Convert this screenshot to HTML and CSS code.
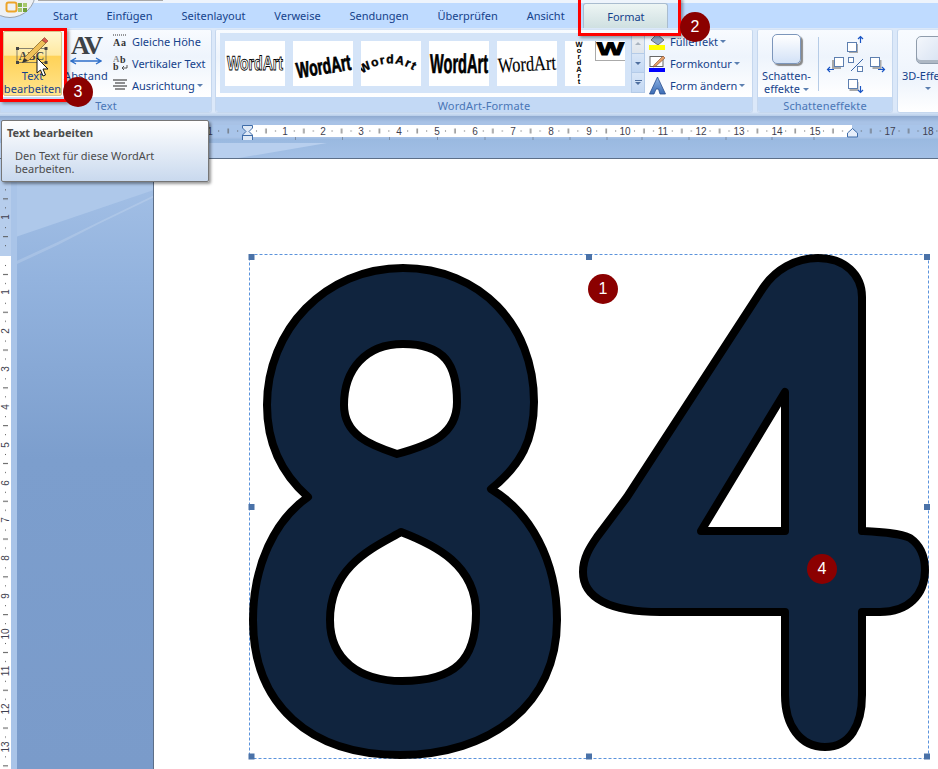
FILE: index.html
```html
<!DOCTYPE html>
<html lang="de">
<head>
<meta charset="utf-8">
<title>Word – WordArt</title>
<link rel="stylesheet" href="styles.css">
</head>
<body>
<div class="app">
  <div class="titlestrip"><div class="titlebar"></div></div>
  <nav class="tabs">
    <span class="tab">Start</span>
    <span class="tab">Einfügen</span>
    <span class="tab">Seitenlayout</span>
    <span class="tab">Verweise</span>
    <span class="tab">Sendungen</span>
    <span class="tab">Überprüfen</span>
    <span class="tab">Ansicht</span>
    <span class="tab tab-active">Format</span>
  </nav>

  <section class="ribbon">
    <div class="group group-text">
      <div class="group-body">
        <div class="bigbtn bigbtn-hot">
          <svg class="ico-edit" width="40" height="32" viewBox="0 0 40 32">
            <rect x="4" y="15.500" width="29" height="14" fill="none" stroke="#555" stroke-width=".7"/>
            <rect x="3" y="14" width="3" height="3" fill="#444"/><rect x="31.500" y="14" width="3" height="3" fill="#444"/>
            <rect x="3" y="28" width="3" height="3" fill="#444"/><rect x="31.500" y="28" width="3" height="3" fill="#444"/>
            <text x="18.500" y="27" class="abc">ABC</text>
            <path d="M11 25 L29 7 L33 10 L15 28 Z" fill="#eec05a" stroke="#8a6a2a" stroke-width=".8"/>
            <path d="M29 7 L31.500 4.500 L35 8 L33 10 Z" fill="#d9574a" stroke="#8a3a2a" stroke-width=".6"/>
            <path d="M11 25 L15 28 L9 30 Z" fill="#333"/>
          </svg>
          <span class="btnlabel">Text<br>bearbeiten</span>
        </div>
        <div class="bigbtn bigbtn-av">
          <span class="avglyph">AV</span>
          <svg class="avarrow" width="32" height="8" viewBox="0 0 32 8"><path d="M1 4 H31 M6 1 L1 4 L6 7 M26 1 L31 4 L26 7" fill="none" stroke="#2f6fc9" stroke-width="1.4"/></svg>
          <span class="btnlabel btnlabel-av">Abstand</span>
        </div>
        <div class="smallcol">
          <div class="smallrow">
            <svg width="15" height="14" viewBox="0 0 15 14"><path d="M0 1 H14" stroke="#333" stroke-dasharray="1 1"/><text x="0" y="12" class="ic-a">A</text><text x="8" y="12" class="ic-a">a</text></svg>
            <span>Gleiche Höhe</span>
          </div>
          <div class="smallrow">
            <svg width="15" height="16" viewBox="0 0 15 16"><text x="0" y="7" class="ic-g">A</text><text x="7" y="8" class="ic-b">b</text><text x="0" y="15" class="ic-b">b</text><path d="M9 13 H14 V10 M9 13 L11 11 M9 13 L11 15" fill="none" stroke="#444" stroke-width=".9"/></svg>
            <span>Vertikaler Text</span>
          </div>
          <div class="smallrow">
            <svg width="15" height="12" viewBox="0 0 15 12"><path d="M0 1H14M2 4H12M0 7H14M2 10H12" stroke="#222" stroke-width="1.2"/></svg>
            <span>Ausrichtung</span><i class="caret"></i>
          </div>
        </div>
      </div>
      <div class="group-label">Text</div>
    </div>

    <div class="group group-wordart">
      <div class="group-body">
        <div class="gallery">
          <div class="tiles">
            <svg class="tile" viewBox="0 0 60 45"><text x="2" y="29" class="wa wa-outline" textLength="56" lengthAdjust="spacingAndGlyphs">WordArt</text></svg>
            <svg class="tile" viewBox="0 0 60 45"><text x="3" y="33" transform="rotate(-9 30 25)" class="wa wa-heavy" textLength="55" lengthAdjust="spacingAndGlyphs">WordArt</text></svg>
            <svg class="tile" viewBox="0 0 60 45"><defs><path id="arch" d="M1 33 Q30 11 59 34"/></defs><text class="wa wa-arch"><textPath href="#arch">WordArt</textPath></text></svg>
            <svg class="tile" viewBox="0 0 60 45"><text x="1" y="32" class="wa wa-cond" textLength="58" lengthAdjust="spacingAndGlyphs">WordArt</text></svg>
            <svg class="tile" viewBox="0 0 60 45"><text x="1" y="30" transform="rotate(-3 30 25)" class="wa wa-serif" textLength="58" lengthAdjust="spacingAndGlyphs">WordArt</text></svg>
            <div class="tile tile-last">
              <svg class="vert" viewBox="0 0 30 45"><text class="wa wa-vert"><tspan x="14" y="6">W</tspan><tspan x="14" y="12">o</tspan><tspan x="14" y="18">r</tspan><tspan x="14" y="24">d</tspan><tspan x="14" y="31">A</tspan><tspan x="14" y="37">r</tspan><tspan x="14" y="43">t</tspan></text></svg>
              <div class="minitile"><svg width="29" height="19" viewBox="0 0 29 19"><text x="14.500" y="14" class="wa wa-w" textLength="27" lengthAdjust="spacingAndGlyphs">W</text></svg></div>
            </div>
          </div>
          <div class="scroller">
            <span class="sbtn sbtn-up"><i class="tri tri-up"></i></span>
            <span class="sbtn"><i class="tri"></i></span>
            <span class="sbtn sbtn-more"><i class="bar"></i><i class="tri"></i></span>
          </div>
        </div>
        <div class="smallcol smallcol-fx">
          <div class="smallrow">
            <svg width="17" height="17" viewBox="0 0 17 17"><path d="M8 1 L15 7 L9 12 L2 7 Z" fill="#8ea8c8" stroke="#555" stroke-width=".8"/><rect x="0" y="12" width="16" height="5" fill="#ff0"/></svg>
            <span>Fülleffekt</span><i class="caret"></i>
          </div>
          <div class="smallrow">
            <svg width="17" height="17" viewBox="0 0 17 17"><rect x="1" y="1.500" width="13" height="10" fill="#fff" stroke="#666"/><path d="M5 10 L14 1 L16 3 L7 11 L4 12 Z" fill="#e3a06a" stroke="#8a4a2a" stroke-width=".6"/><rect x="0" y="13" width="16" height="4" fill="#00f"/></svg>
            <span>Formkontur</span><i class="caret"></i>
          </div>
          <div class="smallrow">
            <svg width="17" height="19" viewBox="0 0 17 19"><defs><linearGradient id="ablue" x1="0" y1="0" x2="0" y2="1"><stop offset="0" stop-color="#8fb4e6"/><stop offset="1" stop-color="#3c6cb4"/></linearGradient></defs><path d="M8.500 1 L16.500 18 L11 18 L9.500 13 L7 13 L5 18 L.500 18 Z" fill="url(#ablue)" stroke="#2a4f8f" stroke-width=".8"/></svg>
            <span>Form ändern</span><i class="caret"></i>
          </div>
        </div>
      </div>
      <div class="group-label">WordArt-Formate</div>
    </div>

    <div class="group group-shadow">
      <div class="group-body">
        <div class="shadowbtn">
          <span class="shadowsq"></span>
          <span class="btnlabel btnlabel-dark">Schatten-<br>effekte<i class="caret caret-inline"></i></span>
        </div>
        <span class="vsep"></span>
        <svg class="nudge" width="60" height="62" viewBox="825 33 60 62">
          <g class="n-sq">
            <rect x="848" y="43" width="9" height="9" class="n-sh"/><rect x="846.500" y="41.500" width="9" height="9"/>
            <rect x="831" y="59" width="9" height="9" class="n-sh"/><rect x="833.500" y="56.500" width="9" height="9"/>
            <rect x="871.500" y="59" width="9" height="9" class="n-sh"/><rect x="869.500" y="56.500" width="9" height="9"/>
            <rect x="848.500" y="81" width="9" height="9" class="n-sh"/><rect x="847.500" y="78.500" width="9" height="9"/>
            <rect x="847.500" y="56.500" width="5" height="5"/><rect x="856.500" y="65.500" width="5" height="5"/>
          </g>
          <path d="M850 70 L862 58" class="n-line"/>
          <path d="M859.500 42 V36 M857 38 L859.500 35.500 L862 38 M833 68.500 H827 M829 66 L826.500 68.500 L829 71 M877 68.500 H883 M881 66 L883.500 68.500 L881 71 M859.500 85 V91 M857 89 L859.500 91.500 L862 89" class="n-arrow"/>
        </svg>
      </div>
      <div class="group-label">Schatteneffekte</div>
    </div>

    <div class="group group-3d">
      <div class="group-body">
        <div class="btn3d">
          <span class="cube"></span>
          <span class="btnlabel btnlabel-dark">3D-Effekte</span>
          <i class="caret caret-3d"></i>
        </div>
      </div>
    </div>
  </section>

  <div class="rulerband">
    <svg class="hruler" width="938" height="15" viewBox="0 125 938 15">
      <defs>
        <pattern id="hticks" x="247" y="125" width="37.800" height="12" patternUnits="userSpaceOnUse">
          <rect x="9" y="5.500" width="1" height="1" fill="#555"/>
          <rect x="18.500" y="3.500" width="1" height="5" fill="#555"/>
          <rect x="28" y="5.500" width="1" height="1" fill="#555"/>
        </pattern>
      </defs>
      <rect x="212" y="125" width="35" height="12" fill="#a9c5ea"/>
      <rect x="247" y="125" width="605" height="12" fill="#fff"/>
      <rect x="852" y="125" width="86" height="12" fill="#a9c5ea"/>
      <rect x="212" y="125" width="726" height="12" fill="url(#hticks)"/>
      <g class="rn">
        <text x="210" y="135">1</text><text x="285" y="135">1</text><text x="323" y="135">2</text><text x="361" y="135">3</text><text x="399" y="135">4</text><text x="437" y="135">5</text><text x="475" y="135">6</text><text x="513" y="135">7</text><text x="551" y="135">8</text><text x="589" y="135">9</text><text x="625" y="135">10</text><text x="663" y="135">11</text><text x="701" y="135">12</text><text x="739" y="135">13</text><text x="777" y="135">14</text><text x="815" y="135">15</text><text x="890" y="135">17</text><text x="928" y="135">18</text>
      </g>
      <path d="M295.500 137v3M342.500 137v3M389.500 137v3M437.500 137v3M485 137v3M533 137v3M570 137v3M607 137v3M642 137v3M689 137v3M726 137v3M772 137v3M814 137v3" stroke="#7d8fa8"/>
      <path d="M242.500 125.500 H252.500 V128 L249 131.500 L252.500 135 V141 H242.500 V135 L246 131.500 L242.500 128 Z" fill="#dfe9f6" stroke="#3f6ca8"/>
      <path d="M242.500 135.500 H252.500" stroke="#3f6ca8"/>
      <path d="M847.500 137 V133 L852.500 128.500 L857.500 133 V137 Z" fill="#e6eefa" stroke="#3f6ca8"/>
    </svg>
  </div>

  <div class="work">
    <div class="vruler">
      <svg width="12" height="610" viewBox="0 159 12 610">
        <defs>
          <pattern id="vticks" x="0" y="256" width="12" height="37.800" patternUnits="userSpaceOnUse">
            <rect x="5" y="9" width="1" height="1" fill="#555"/>
            <rect x="3" y="18" width="5" height="1" fill="#555"/>
            <rect x="5" y="27" width="1" height="1" fill="#555"/>
          </pattern>
        </defs>
        <rect x="0" y="159" width="11" height="97" fill="#b6cdec"/>
        <rect x="0" y="256" width="11" height="513" fill="#fff"/>
        <rect x="0" y="159" width="11" height="610" fill="url(#vticks)"/>
        <g class="rn rn-v">
          <text transform="translate(8.500 217) rotate(-90)">1</text>
          <text transform="translate(8.500 292) rotate(-90)">1</text>
          <text transform="translate(8.500 331) rotate(-90)">2</text>
          <text transform="translate(8.500 369) rotate(-90)">3</text>
          <text transform="translate(8.500 407) rotate(-90)">4</text>
          <text transform="translate(8.500 445) rotate(-90)">5</text>
          <text transform="translate(8.500 483) rotate(-90)">6</text>
          <text transform="translate(8.500 520) rotate(-90)">7</text>
          <text transform="translate(8.500 558) rotate(-90)">8</text>
          <text transform="translate(8.500 596) rotate(-90)">9</text>
          <text transform="translate(8.500 634) rotate(-90)">10</text>
          <text transform="translate(8.500 671) rotate(-90)">11</text>
          <text transform="translate(8.500 709) rotate(-90)">12</text>
          <text transform="translate(8.500 747) rotate(-90)">13</text>
        </g>
      </svg>
    </div>
    <div class="sidepanel"></div>
    <div class="doc">
      <svg class="canvas" width="784" height="610" viewBox="154 159 784 610">
        <rect x="249.500" y="254.500" width="679" height="504" class="sel"/>
        <g class="digit">
          <path fill-rule="evenodd" d="M308 497 C283 475 267 445 267 405 C267 330 325 268 403 268 C480 268 534 325 534 402 C534 440 521 465 491 489 C530 512 557 560 557 620 C557 705 490 755 400 755 C310 755 253 705 253 620 C253 565 275 520 308 497 Z M397 454 C370 445 344 435 344 405 C344 370 365 344 403 344 C445 344 457 365 457 402 C457 435 430 445 397 454 Z M401 532 C375 547 330 565 330 620 C330 660 360 681 402 681 C455 681 476 660 476 613 C476 565 435 545 401 532 Z"/>
          <path fill-rule="evenodd" d="M818 258 C845 258 862 275 862 297 L862 531 C880 532 900 533 910 538 C920 545 925 555 925 570 C925 595 908 612 880 612 L862 612 L862 695 C862 725 850 747 825 747 C800 747 785 725 785 695 L785 612 L660 612 C610 612 583 598 583 572 C583 558 590 547 597 537 L627 497 L763 288 C775 270 795 258 818 258 Z M785 392 L785 531 L701 531 Z"/>
        </g>
        <g class="handles">
          <rect x="248.500" y="254" width="6" height="6"/><rect x="586" y="254" width="6" height="6"/><rect x="924" y="254" width="6" height="6"/>
          <rect x="248.500" y="504" width="6" height="6"/><rect x="924" y="504" width="6" height="6"/>
          <rect x="248.500" y="753.500" width="6" height="6"/><rect x="586" y="753.500" width="6" height="6"/><rect x="924" y="753.500" width="6" height="6"/>
        </g>
      </svg>
    </div>
  </div>

  <!-- overlays -->
  <div class="officebtn">
    <svg width="40" height="20" viewBox="0 0 40 20">
      <circle cx="10" cy="-8" r="25.500" fill="#eef1f5" stroke="#9aa3ad"/>
      <rect x="6.500" y="2.500" width="10" height="9" rx="2" fill="none" stroke="#eda52a" stroke-width="2"/>
      <rect x="18" y="3" width="4" height="4" fill="#7fb04a"/><rect x="23" y="3" width="4" height="4" fill="#a8c96c"/>
      <rect x="18" y="8" width="4" height="4" fill="#a8c96c"/><rect x="23" y="8" width="4" height="4" fill="#6fa03a"/>
    </svg>
  </div>
  <div class="redbox redbox-tab"></div>
  <div class="redbox redbox-btn"></div>
  <svg class="cursor" width="13" height="21" viewBox="0 0 13 21"><path d="M1 1 V16 L4.500 13 L7 19 L9.500 18 L7 12 L12 12 Z" fill="#fff" stroke="#111"/></svg>
  <div class="tooltip">
    <div class="tip-title">Text bearbeiten</div>
    <div class="tip-body">Den Text für diese WordArt<br>bearbeiten.</div>
  </div>
  <span class="badge b1">1</span>
  <span class="badge b2">2</span>
  <span class="badge b3">3</span>
  <span class="badge b4">4</span>
</div>
</body>
</html>
```
FILE: styles.css
```css
* { box-sizing: border-box; }
html, body { margin: 0; padding: 0; background: #fff; }
body { font-family: "Noto Sans", "Liberation Sans", sans-serif; font-size: 11px; color: #15428b; }
.app { position: relative; width: 938px; height: 769px; overflow: hidden; display: flex; flex-direction: column; background: #fff; }

.titlestrip { height: 3px; background: #eef4fc; padding-left: 38px; flex: none; }
.titlebar { width: 125px; height: 1px; background: #a9a9a9; }

.tabs { height: 25px; flex: none; display: flex; align-items: center; gap: 28.800px; padding-left: 53px; background: #bfdbff; line-height: 25px; }
.tab { color: #15428b; white-space: nowrap; }
.tab-active { margin-left: -10px; width: 85px; flex: none; text-align: center; height: 25px; background: linear-gradient(#edf5f4, #cfe0e1); border: 1px solid #a9bccf; border-bottom: 0; border-radius: 3px 3px 0 0; box-shadow: 0 1px 0 #f2f7f7; }

.ribbon { height: 88px; flex: none; display: flex; gap: 3px; padding-top: 1px; background: linear-gradient(#dbe8f9 0, #dbe8f9 84px, #b7cde9 100%); }
.group { display: flex; flex-direction: column; height: 84px; border: 1px solid #c5d7ee; border-top-color: #d5e3f5; border-radius: 0 3px 3px 0; background: #fff; overflow: hidden; flex: none; }
.group-text { width: 212px; }
.group-wordart { width: 538px; border-radius: 3px; }
.group-shadow { width: 136px; border-radius: 3px; margin-left: 1px; }
.group-3d { width: 60px; border-radius: 3px 0 0 3px; margin-left: 1px; }
.group-body { flex: 1; display: flex; background: linear-gradient(#f8fbff, #eef4fc 40%, #fff); min-height: 0; }
.group-label { height: 15px; flex: none; background: #c3d9f5; text-align: center; line-height: 17px; color: #4a76b5; letter-spacing: .15px; }
.group-3d .group-body { background: linear-gradient(#f8fbff, #eef4fc 60%, #fff); }

.bigbtn { display: flex; flex-direction: column; align-items: center; position: relative; flex: none; }
.bigbtn-hot { width: 59px; height: 65px; margin: 1px 0 0 2px; background: linear-gradient(#fff6cf 0, #ffe9a0 37%, #ffd257 38%, #ffe48d 100%); border: 1px solid #d9c48a; border-radius: 2px; padding-top: 1px; }
.ico-edit { display: block; flex: none; }
.abc { font: bold 12px "Liberation Serif", serif; fill: #444; text-anchor: middle; }
.btnlabel { line-height: 13px; text-align: center; color: #15428b; white-space: nowrap; }
.bigbtn-hot .btnlabel { margin-top: 4px; letter-spacing: .1px; }
.bigbtn-av { width: 46px; margin-left: 1px; }
.avglyph { font: bold 26px/26px "Liberation Serif", serif; color: #3d4248; margin-top: 3px; letter-spacing: -2px; height: 24px; }
.avarrow { display: block; }
.btnlabel-av { margin-top: 4px; letter-spacing: .2px; }

.smallcol { display: flex; flex-direction: column; margin-left: 4px; }
.smallcol-fx { margin-left: 4px; }
.smallrow { height: 22px; display: flex; align-items: center; gap: 4px; white-space: nowrap; }
.smallrow svg { width: 15px; flex: none; display: block; }
.smallcol-fx .smallrow svg { width: 17px; }
.ic-a { font: bold 10px "Liberation Serif", serif; fill: #333; }
.ic-g { font: bold 9px "Liberation Serif", serif; fill: #888; }
.ic-b { font: bold 10px "Liberation Serif", serif; fill: #333; }
.caret { display: inline-block; width: 0; height: 0; border: 3px solid transparent; border-top: 3px solid #5b7fb0; border-bottom: 0; margin-left: -2px; }
.caret-inline { margin-left: 3px; vertical-align: 2px; }

.gallery { width: 425px; height: 60px; margin: 3px 0 0 4px; display: flex; background: #d4e4f8; flex: none; }
.tiles { display: flex; gap: 8px; padding: 8px 0 0 5px; flex: 1; }
.tile { width: 60px; height: 45px; background: #fff; display: block; flex: none; position: relative; }
.tile-last { display: flex; }
.vert { width: 30px; height: 45px; display: block; flex: none; }
.minitile { width: 30px; height: 20px; border: 1px solid #aaa; border-top: 0; border-right: 0; background: #fff; }
.minitile svg { display: block; }
.wa { font-family: "Liberation Sans", sans-serif; font-weight: bold; text-rendering: geometricPrecision; }
.wa-outline { font-size: 20px; fill: #fff; stroke: #000; stroke-width: .9px; }
.wa-heavy { font-size: 22px; fill: #000; stroke: #000; stroke-width: .8px; }
.wa-arch { font-size: 12px; fill: #000; letter-spacing: 1.200px; stroke: #000; stroke-width: .4px; }
.wa-cond { font-size: 27px; fill: #000; stroke: #000; stroke-width: .7px; }
.wa-serif { font: 21px "Liberation Serif", serif; fill: #000; stroke: #000; stroke-width: .2px; }
.wa-vert { font-size: 7.500px; fill: #000; text-anchor: middle; }
.wa-w { font-size: 18px; fill: #000; stroke: #000; stroke-width: 1px; text-anchor: middle; }

.scroller { width: 14px; display: flex; flex-direction: column; flex: none; }
.sbtn { flex: 1; display: flex; flex-direction: column; align-items: center; justify-content: center; gap: 1px; background: linear-gradient(#d9e6f7, #c3d8f3); border: 1px solid #b4cbe8; border-top: 0; }
.sbtn-up { background: linear-gradient(#eef1f5, #dfe5ec); border-top: 1px solid #c5d3e4; }
.tri { width: 0; height: 0; border: 3px solid transparent; border-top: 3px solid #4f6f9f; border-bottom: 0; display: block; }
.tri-up { border-top: 0; border-bottom: 3px solid #aab4c0; }
.bar { width: 7px; height: 1px; background: #4f6f9f; display: block; }

.shadowbtn { width: 57px; display: flex; flex-direction: column; align-items: center; flex: none; }
.shadowsq { width: 29px; height: 30px; margin-top: 4px; border: 1px solid #7c96bb; border-radius: 5px; background: linear-gradient(#fff, #d3e2f7); box-shadow: 2px 2px 1px #8a8a8a; display: block; }
.btnlabel-dark { color: #15428b; }
.shadowbtn .btnlabel { margin-top: 5px; }
.vsep { width: 1px; height: 54px; margin: 7px 0 0 3px; background: #b5cbe6; flex: none; }
.nudge { display: block; margin: 4px 0 0 7px; flex: none; }
.n-sq rect { fill: #fff; stroke: #5d7fb0; }
.n-sq rect.n-sh { fill: #a9a9a9; stroke: none; }
.n-line { stroke: #3a66a8; fill: none; }
.n-arrow { stroke: #1a55c4; fill: none; stroke-width: 1.200px; }

.btn3d { width: 60px; display: flex; flex-direction: column; padding-left: 4px; flex: none; }
.cube { width: 30px; height: 28px; margin: 6px 0 0 14px; border: 1px solid #8f9cac; border-radius: 5px; background: linear-gradient(135deg, #f4f7fc, #d5e0f1); box-shadow: inset 0 -3px 0 #aeb8c4; display: block; flex: none; }
.btn3d .btnlabel { margin-top: 5px; text-align: left; }
.caret-3d { margin: 5px 0 0 23px; }

.rulerband { height: 43px; flex: none; background: linear-gradient(#8faad0 0, #a8c2e6 6px, #a8c2e6 22px, #9ab9e0 23px, #a3c0e6 100%); border-bottom: 1px solid #5d6f88; position: relative; padding-top: 9px; }
.rulerband::before { content: ""; position: absolute; left: 0; top: 27px; width: 327px; height: 15px; background: #b8cfee; clip-path: polygon(0 0, 100% 0, 73% 100%, 0 100%); }
.hruler { display: block; position: relative; }
.rn text { font: 10px "Liberation Sans", sans-serif; fill: #3f3f4f; text-anchor: middle; }
.rn-v text { text-anchor: middle; }

.work { flex: 1; display: flex; min-height: 0; }
.vruler { width: 17px; flex: none; background: linear-gradient(90deg, #d9e6f7 0 65%, #a9c4e8 65%); }
.vruler svg { display: block; }
.sidepanel { width: 137px; flex: none; position: relative; overflow: hidden; background: linear-gradient(#a6c2e7 0, #93b3de 120px, #7c9ecd 300px, #7a9bca 100%); border-right: 1px solid #5d6f88; }
.sidepanel::before { content: ""; position: absolute; left: 0; top: 0; width: 136px; height: 80px; background: #aec8ea; clip-path: polygon(0 0, 100% 0, 100% 39%, 0 97%); }
.sidepanel::after { content: ""; position: absolute; left: 0; top: 0; width: 136px; height: 105px; background: rgba(255,255,255,.16); clip-path: polygon(100% 35%, 100% 37%, 60% 62%, 30% 82%, 0 100%, 0 97%, 30% 79%, 60% 60%); }
.doc { flex: 1; background: #fff; min-width: 0; }
.canvas { display: block; }
.sel { fill: none; stroke: #5b93dc; stroke-width: 1; stroke-dasharray: 3 2; }
.digit path { fill: #10243e; stroke: #000; stroke-width: 8; stroke-linejoin: round; }
.handles rect { fill: #4a72a8; }

.officebtn { position: absolute; left: 0; top: 0; width: 40px; height: 20px; }
.officebtn svg { display: block; }
.redbox { position: absolute; border: 3px solid #f00; box-shadow: 2px 2px 3px rgba(0,0,0,.35); }
.redbox-tab { left: 578px; top: -3px; width: 103px; height: 39px; }
.redbox-btn { left: 0; top: 28px; width: 67px; height: 74px; }
.cursor { position: absolute; left: 36px; top: 57px; display: block; }

.tooltip { position: absolute; left: 1px; top: 120px; width: 208px; height: 62px; background: linear-gradient(#fff, #c9d9ee); border: 1px solid #767676; border-radius: 2px; box-shadow: 2px 2px 3px rgba(0,0,0,.4); padding: 5px 0 0 5px; color: #4c4c4c; line-height: 13px; }
.tip-title { font-weight: bold; }
.tip-body { margin: 10px 0 0 8px; }

.badge { position: absolute; width: 30px; height: 30px; border-radius: 50%; background: #8b0000; color: #fff; text-align: center; font: 16px/30px "Liberation Sans", sans-serif; }
.b1 { left: 588px; top: 274px; }
.b2 { left: 680px; top: 12px; }
.b3 { left: 63px; top: 77px; }
.b4 { left: 807px; top: 554px; }
```
